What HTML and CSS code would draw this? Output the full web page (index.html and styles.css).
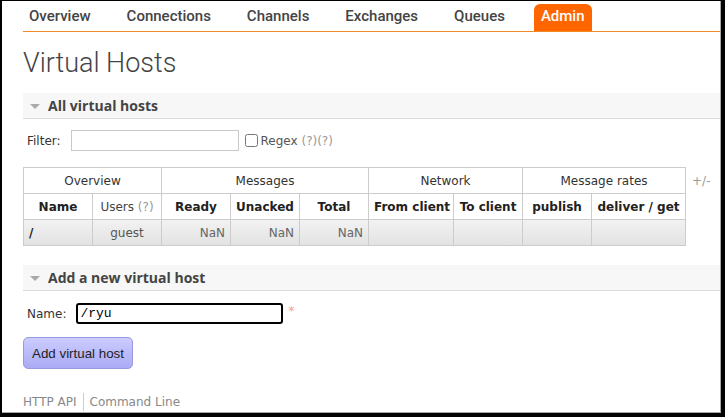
FILE: index.html
```html
<!DOCTYPE html>
<html>
<head>
<meta charset="utf-8">
<link rel="stylesheet" href="styles.css">
</head>
<body>
<div class="window">
  <ul class="menu">
    <li>Overview</li>
    <li>Connections</li>
    <li>Channels</li>
    <li>Exchanges</li>
    <li>Queues</li>
    <li class="active">Admin</li>
  </ul>

  <h1 class="title">Virtual Hosts</h1>

  <div class="section">
    <h2 class="sec-head"><span class="tri"></span>All virtual hosts</h2>
    <div class="filter">
      <label class="lbl">Filter:</label>
      <input class="filter-input" type="text">
      <input class="chk" type="checkbox">
      <span class="regex">Regex <span class="help">(?)(?)</span></span>
    </div>
    <div class="table-wrap">
      <table class="list">
        <colgroup>
          <col class="c69"><col class="c69"><col class="c69"><col class="c69"><col class="c69">
          <col class="c85"><col class="c69"><col class="c69"><col class="c94">
        </colgroup>
        <thead>
          <tr class="grp">
            <th colspan="2">Overview</th>
            <th colspan="3">Messages</th>
            <th colspan="2">Network</th>
            <th colspan="2">Message rates</th>
          </tr>
          <tr class="sub">
            <th>Name</th>
            <th class="normal">Users <span class="help">(?)</span></th>
            <th>Ready</th>
            <th>Unacked</th>
            <th>Total</th>
            <th>From client</th>
            <th>To client</th>
            <th>publish</th>
            <th>deliver / get</th>
          </tr>
        </thead>
        <tbody>
          <tr class="row">
            <td class="name">/</td>
            <td class="center">guest</td>
            <td class="num">NaN</td>
            <td class="num">NaN</td>
            <td class="num">NaN</td>
            <td></td>
            <td></td>
            <td></td>
            <td></td>
          </tr>
        </tbody>
      </table>
      <span class="plusminus">+/-</span>
    </div>
  </div>

  <div class="section add">
    <h2 class="sec-head"><span class="tri"></span>Add a new virtual host</h2>
    <div class="name-row">
      <label class="lbl">Name:</label>
      <input class="name-input" type="text" value="/ryu">
      <span class="req">*</span>
    </div>
    <button class="btn">Add virtual host</button>
  </div>

  <div class="footer">
    <span class="flink first">HTTP API</span><span class="flink">Command Line</span>
  </div>
</div>
</body>
</html>
```

FILE: styles.css
```css
html, body {
  margin: 0;
  padding: 0;
}
body {
  background: #000;
  padding: 1px 4px 4px 2px;
  font-family: "DejaVu Sans", Verdana, sans-serif;
  font-size: 12px;
  color: #484848;
}
.window {
  width: 697px;
  height: 411px;
  background: #fff;
  border-right: 1px solid #a8a8a8;
  border-bottom: 1px solid #a8a8a8;
  padding-left: 21px;
  overflow: hidden;
}
.menu {
  list-style: none;
  margin: 3px 0 0 0;
  padding: 0;
  display: flex;
  border-bottom: 1px solid #f08a24;
}
.menu li {
  font-family: Roboto, sans-serif;
  font-weight: 500;
  font-size: 15px;
  color: #444;
  padding: 0 7px 2px 7px;
  line-height: 25px;
  margin-right: 22px;
  border-radius: 6px 6px 0 0;
}
.menu li:first-child {
  padding-left: 6px;
}
.menu li.active {
  background: #ff6600;
  color: #fff;
}
.title {
  font-family: Roboto, sans-serif;
  font-weight: 300;
  font-size: 27px;
  line-height: 32px;
  color: #444;
  margin: 15px 0 14px 0;
}
.sec-head {
  margin: 0;
  height: 25px;
  line-height: 25px;
  background: #f7f7f7;
  border-bottom: 1px solid #ddd;
  font-family: "Open Sans", sans-serif;
  font-weight: 700;
  font-size: 14px;
  color: #444;
  display: flex;
  align-items: center;
  padding-left: 7px;
}
.tri {
  width: 0;
  height: 0;
  border-left: 5px solid transparent;
  border-right: 5px solid transparent;
  border-top: 5px solid #aaa;
  margin-right: 8px;
  margin-top: 1px;
}
.filter {
  display: flex;
  align-items: center;
  margin-top: 11px;
  padding-left: 4px;
  height: 21px;
}
.lbl {
  color: #333;
}
.filter-input {
  margin: 0 0 0 10px;
  width: 168px;
  height: 21px;
  box-sizing: border-box;
  border: 1px solid #c8c8c8;
  padding: 0 3px;
}
.chk {
  margin: 0 0 0 6px;
  width: 13px;
  height: 13px;
}
.regex {
  margin-left: 3px;
  color: #555;
}
.help {
  color: #999;
}
.table-wrap {
  display: flex;
  align-items: flex-start;
  margin-top: 16px;
}
.list {
  border-collapse: collapse;
  table-layout: fixed;
  width: 663px;
}
.c69 { width: 69px; }
.c85 { width: 85px; }
.c94 { width: 94px; }
.list th, .list td {
  border: 1px solid #ccc;
  height: 25px;
  padding: 0 5px;
  white-space: nowrap;
  overflow: hidden;
}
.list tr.grp th {
  font-weight: normal;
  color: #333;
}
.list tr.sub th {
  font-weight: bold;
  color: #222;
}
.list tr.sub th.normal {
  font-weight: normal;
  color: #444;
}
.list tr.row {
  background: linear-gradient(#f2f2f2, #e2e2e2);
}
.list td.name {
  font-weight: bold;
  color: #222;
  text-align: left;
}
.list td.center {
  text-align: center;
  color: #555;
}
.list td.num {
  text-align: right;
  color: #666;
}
.plusminus {
  margin-left: 6px;
  margin-top: 7px;
  color: #999;
}
.section.add {
  margin-top: 19px;
}
.name-row {
  display: flex;
  align-items: center;
  margin-top: 12px;
  padding-left: 4px;
  height: 21px;
}
.name-input {
  margin: 0 0 0 10px;
  width: 207px;
  height: 21px;
  box-sizing: border-box;
  border: 2px solid #000;
  border-radius: 3px;
  padding: 0 2px;
  font-family: "Liberation Mono", monospace;
  font-size: 13px;
  color: #000;
  outline: none;
}
.req {
  color: #f99;
  margin-left: 5px;
  margin-top: -6px;
}
.btn {
  display: block;
  margin-top: 13px;
  width: 110px;
  height: 32px;
  padding: 0;
  border: 1px solid #99d;
  border-radius: 5px;
  background: linear-gradient(#ccccff, #aaaaf6);
  font-family: "Liberation Sans", Arial, sans-serif;
  font-size: 13.33px;
  color: #222;
}
.footer {
  margin-top: 24px;
  display: flex;
  height: 18px;
  line-height: 18px;
  color: #888;
}
.flink {
  padding-left: 6px;
}
.flink.first {
  padding-left: 0;
  padding-right: 6px;
  border-right: 1px solid #ccc;
}
```
